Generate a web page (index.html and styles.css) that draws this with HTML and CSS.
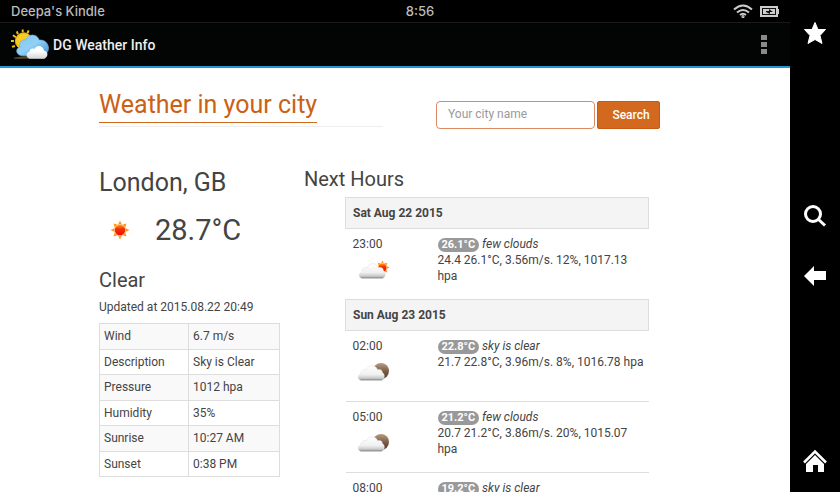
FILE: index.html
```html
<!DOCTYPE html>
<html lang="en">
<head>
<meta charset="utf-8">
<meta name="viewport" content="width=device-width, initial-scale=1">
<title>DG Weather Info</title>
<link rel="stylesheet" href="styles.css">
</head>
<body>
<svg class="defs" aria-hidden="true">
  <defs>
    <linearGradient id="cloud" x1="0" y1="0" x2="0" y2="1"><stop offset="0" stop-color="#fff"/><stop offset=".6" stop-color="#f0f0f0"/><stop offset=".85" stop-color="#c8c8c8"/><stop offset="1" stop-color="#777"/></linearGradient>
    <linearGradient id="sun" x1="0" y1="0" x2="0" y2="1"><stop offset="0" stop-color="#ffa012"/><stop offset=".4" stop-color="#f2330c"/><stop offset="1" stop-color="#fa0500"/></linearGradient>
    <linearGradient id="moon" x1="0" y1="0" x2="0" y2="1"><stop offset="0" stop-color="#b89c82"/><stop offset=".5" stop-color="#7c5f48"/><stop offset="1" stop-color="#4c3425"/></linearGradient>
    <linearGradient id="sky" x1="0" y1="0" x2="1" y2="1"><stop offset="0" stop-color="#8cc8f0"/><stop offset=".5" stop-color="#8fd0f5"/><stop offset="1" stop-color="#3c8fdc"/></linearGradient>
    <linearGradient id="white" x1="0" y1="0" x2="0" y2="1"><stop offset=".4" stop-color="#fff"/><stop offset="1" stop-color="#d2d5d8"/></linearGradient>
    <symbol id="rays" viewBox="-10 -10 20 20">
      <path fill="#ff9a1c" d="M0-9.5 2-5.2 6.5-6.5 5.2-2 9.5 0 5.2 2 6.5 6.5 2 5.2 0 9.500-2 5.200-6.500 6.500-5.200 2-9.500 0-5.200-2-6.500-6.500-2-5.200z"/>
      <circle r="5.800" fill="#ffe9c8"/><circle r="5.300" fill="url(#sun)"/>
    </symbol>
    <symbol id="cloud-shape" viewBox="0 0 31 17">
      <path fill="url(#cloud)" stroke="#ddd" stroke-width=".5" d="M4 16.500C0 15.500-.5 11 3.500 9.500 3.500 5.500 7 4 9.500 5 11-.5 19.500-1 21.500 5c3-1 5 .5 5 3 3 1.500 3 7-1 8.500z"/>
    </symbol>
    <symbol id="cloud-night" viewBox="0 0 34 20">
      <circle cx="24" cy="9" r="8" fill="url(#moon)"/>
      <use href="#cloud-shape" x="0" y="3" width="30" height="16"/>
    </symbol>
    <symbol id="cloud-day" viewBox="0 0 34 20">
      <use href="#rays" x="18" y="0" width="15" height="15"/>
      <use href="#cloud-shape" x="1" y="3" width="30" height="16"/>
    </symbol>
  </defs>
</svg>
<div class="device">
  <div class="screen">
    <div class="status">
      <span class="owner">Deepa's Kindle</span>
      <span class="clock">8:56</span>
      <span class="signals">
        <svg width="20" height="14" viewBox="0 0 20 14" fill="none" stroke="#ccc" stroke-width="2"><path d="M1 5.500Q10-2.500 19 5.500M4 8.500q6-5 12 0M7 11q3-2.500 6 0"/><circle cx="10" cy="12.500" r=".6"/></svg>
        <svg width="19" height="11" viewBox="0 0 19 11"><path fill="#ccc" d="M0 0h18v3h1v5h-1v3H0z"/><path fill="#111" d="M2 2h14v7H2z"/><path fill="#ccc" d="M3 3h12v5H3z"/><path fill="#111" d="M6 5h3V3l4 3h-3v2L6 6z"/></svg>
      </span>
    </div>
    <header class="appbar">
      <svg class="logo" width="39" height="31" viewBox="0 0 40 31">
        <g stroke="#f5c21b" stroke-width="2"><path d="M12 0v3M18 1l-1 3M6 2l1 3M2 6l3 2M0 12h3M1 18l3-1"/></g>
        <circle cx="13" cy="12" r="8.500" fill="#f7cb20" stroke="#e8a712"/>
        <path fill="#776a3b" opacity=".7" d="M3 29q12-3 32-1v2H3z"/>
        <path fill="url(#sky)" stroke="#69a9d9" stroke-width=".6" d="M11 27C5 26 4 20 9 18 8 13 11 10 15 11 17 4 27 4 29 11c7-1 11 6 9 11-1 3-4 5-8 5z"/>
        <path fill="url(#white)" d="M19 30c-4-1-4-6 0-7 0-3 3-4 5-3 3-5 9-3 10 2 5 1 4 7 0 8z"/>
      </svg>
      <h1>DG Weather Info</h1>
      <button class="more" aria-label="More options"><svg width="6" height="19" viewBox="0 0 6 19" fill="#8a8a8a"><path d="M0 0h6v5H0zM0 7h6v5H0zM0 14h6v5H0z"/></svg></button>
    </header>
    <main>
      <div class="top">
        <div class="heading"><h2><a href="#">Weather in your city</a></h2></div>
        <form class="search">
          <input type="text" aria-label="City" placeholder="Your city name">
          <button type="button">Search</button>
        </form>
      </div>
      <div class="columns">
        <section class="current">
          <h3>London, GB</h3>
          <p class="now"><svg width="20" height="20"><use href="#rays" width="20" height="20"/></svg><span>28.7°C</span></p>
          <h4>Clear</h4>
          <p class="updated">Updated at 2015.08.22 20:49</p>
          <table class="facts">
            <tr><td>Wind</td><td>6.7 m/s</td></tr>
            <tr><td>Description</td><td>Sky is Clear</td></tr>
            <tr><td>Pressure</td><td>1012 hpa</td></tr>
            <tr><td>Humidity</td><td>35%</td></tr>
            <tr><td>Sunrise</td><td>10:27 AM</td></tr>
            <tr><td>Sunset</td><td>0:38 PM</td></tr>
          </table>
        </section>
        <section class="next">
          <h4>Next Hours</h4>
          <table class="forecast">
            <tr><th colspan="2">Sat Aug 22 2015</th></tr>
            <tr><td>23:00<svg width="34" height="20"><use href="#cloud-day"/></svg></td><td><span class="badge">26.1°C</span> <i>few clouds</i><br>24.4 26.1°C, 3.56m/s. 12%, 1017.13 hpa</td></tr>
            <tr><th colspan="2">Sun Aug 23 2015</th></tr>
            <tr><td>02:00<svg width="34" height="20"><use href="#cloud-night"/></svg></td><td><span class="badge">22.8°C</span> <i>sky is clear</i><br>21.7 22.8°C, 3.96m/s. 8%, 1016.78 hpa</td></tr>
            <tr><td>05:00<svg width="34" height="20"><use href="#cloud-night"/></svg></td><td><span class="badge">21.2°C</span> <i>few clouds</i><br>20.7 21.2°C, 3.86m/s. 20%, 1015.07 hpa</td></tr>
            <tr><td>08:00<svg width="34" height="20"><use href="#cloud-day"/></svg></td><td><span class="badge">19.2°C</span> <i>sky is clear</i></td></tr>
          </table>
        </section>
      </div>
    </main>
  </div>
  <nav class="rail">
    <button aria-label="Favorites"><svg width="24" height="24" viewBox="0 0 24 24"><path fill="#fff" stroke="#fff" d="M12 1.500l3 7h7.500l-5.500 6 2 8-7-4-7 4 2-8-5.500-6H9z"/></svg></button>
    <button aria-label="Search" class="find"><svg width="24" height="24" viewBox="0 0 24 24" fill="none" stroke="#fff"><circle cx="10" cy="10" r="7.500" stroke-width="3"/><path stroke-width="3" d="M15.500 15.500l6.500 6"/></svg></button>
    <button aria-label="Back" class="back"><svg width="24" height="24" viewBox="0 0 24 24"><path fill="#fff" d="M1 12L11 2v5h12v9H11v6z"/></svg></button>
    <button aria-label="Home" class="home"><svg width="24" height="24" viewBox="0 0 24 24"><path fill="none" stroke="#fff" stroke-width="2.500" d="M1 13.500L12 2.500l11 11"/><path fill="#fff" d="M12 6l9 9v8h-6v-7h-5v7H3v-8z"/></svg></button>
  </nav>
</div>
</body>
</html>
```
FILE: styles.css
```css
* { box-sizing: border-box; }

body {
  margin: 0;
  height: 100vh;
  overflow: hidden;
  background: #fff;
  color: #444;
  font: 12px/16px Roboto, "Liberation Sans", sans-serif;
}

h1, h2, h3, h4, p { margin: 0; font-weight: 400; }
button { border: 0; padding: 0; background: none; font: inherit; }
svg { display: block; }
.defs { position: absolute; width: 0; height: 0; }

.device { display: flex; height: 100%; }
.screen { flex: 1; min-width: 0; overflow: hidden; }

.status {
  display: grid;
  grid-template-columns: 1fr auto 1fr;
  align-items: center;
  height: 23px;
  padding: 0 11px;
  border-bottom: 1px solid #1a1a1a;
  background: #000;
  color: #bbb;
  font: 500 13px/22px Inter, "Liberation Sans", sans-serif;
}
.clock { padding-left: 50px; }
.signals { display: flex; justify-content: flex-end; align-items: center; gap: 7px; }

.appbar {
  display: flex;
  align-items: center;
  gap: 3px;
  height: 45px;
  padding: 0 23px 0 11px;
  border-bottom: 2px solid #1d9ccb;
  background: #030404;
  color: #eee;
}
h1 { font-size: 14px; line-height: 20px; font-weight: 500; }
.more { margin-left: auto; }

main { padding: 20px 130px 0 99px; }

.top { display: flex; justify-content: space-between; align-items: flex-start; }
.heading { width: 284px; border-bottom: 1px solid #eee; }
h2 { display: flex; padding-bottom: 3px; }
h2 a {
  border-bottom: 1px solid #d2691e;
  color: #cc6114;
  font-size: 25px;
  line-height: 34px;
  text-decoration: none;
}
.search { display: flex; gap: 2px; padding-top: 13px; }
.search input {
  width: 159px;
  height: 28px;
  padding: 0 11px 3px;
  border: 1px solid #dc8a62;
  border-radius: 4px;
  font: inherit;
}
.search input::placeholder { color: #999; }
.search button {
  width: 63px;
  height: 28px;
  padding-left: 5px;
  border: 1px solid #c55b12;
  border-radius: 2px;
  background: #d2691e;
  color: #fff;
  font-weight: 500;
}

.columns { display: flex; gap: 25px; padding-top: 37px; }
.current { width: 180px; }
h3 { font-size: 25px; line-height: 34px; }
.now { display: flex; align-items: center; gap: 25px; padding: 10px 0 0 11px; font-size: 29px; line-height: 40px; }
h4 { font-size: 20px; line-height: 26px; }
.current h4 { padding-top: 17px; }
.updated { padding: 6px 0 8px; }

table { border-collapse: collapse; }
.facts { width: 181px; height: 154px; }
.facts td { padding: 0 4px; border: 1px solid #ddd; }
.facts td:first-child { width: 89px; }
.facts tr:nth-child(odd) { background: #f9f9f9; }

.next { flex: 1; }
.next h4 { padding-bottom: 5px; }
.forecast { width: 304px; margin-left: 41px; }
.forecast th {
  padding: 7px;
  border: 1px solid #ddd;
  background: #f4f4f4;
  text-align: left;
  font-weight: 700;
}
.forecast td {
  height: 71px;
  padding: 7px 1px 6px 7px;
  border-top: 1px solid #ddd;
  vertical-align: top;
}
.forecast td:first-child { width: 85px; }
.forecast td svg { margin: 8px 0 0 4px; }
.badge {
  display: inline-block;
  padding: 0 4px;
  border-radius: 8px;
  background: #999;
  color: #fff;
  font-size: 11px;
  line-height: 14px;
  font-weight: 700;
}

.rail {
  display: flex;
  flex-direction: column;
  align-items: center;
  width: 50px;
  padding: 21px 0 19px;
  background: #000;
}
.find { margin-top: 159px; }
.back { margin-top: 36px; }
.home { margin-top: auto; }
```
